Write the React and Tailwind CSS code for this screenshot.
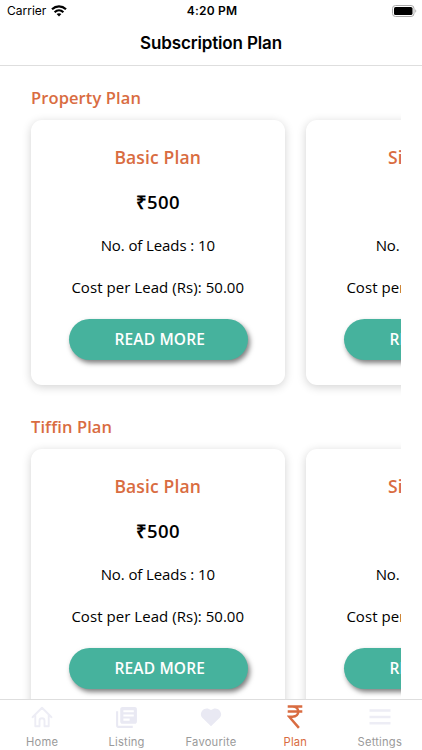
import React from 'react'
import { MdLibraryBooks } from 'react-icons/md'

const sections = ["Property Plan", "Tiffin Plan"];

const plans = [
  { name: "Basic Plan", price: "₹500", leads: 10, cost: "50.00" },
  { name: "Silver Plan", price: "₹900", leads: 20, cost: "45.00" },
];

const StatusBar = () => (
  <div className="grid h-[22px] grid-cols-3 items-center pl-[7px] pr-[5px] text-[12px]">
    <div className="flex items-center gap-[5px]">
      <span>Carrier</span>
      <svg width="16" height="12" viewBox="0 0 16 12" fill="none" stroke="#000" strokeWidth="2.2">
        <path d="M1 4.3C5 .5 11 .5 15 4.3" />
        <path d="M3.6 7.2C6.2 4.8 9.8 4.8 12.4 7.2" />
        <path d="M5.6 9.1C7 7.9 9 7.9 10.4 9.1L8 11.5Z" fill="#000" stroke="none" />
      </svg>
    </div>
    <span className="text-center text-[12px] font-semibold tracking-[0.2px]">4:20 PM</span>
    <svg className="justify-self-end" width="25" height="12" viewBox="0 0 25 12">
      <rect x=".5" y=".5" width="21.5" height="11" rx="3" fill="#fff" stroke="#aaa" />
      <rect x="2" y="2" width="18.5" height="8" rx="1.6" />
      <path d="M23.3 4.2v3.6c1.3-.6 1.3-3 0-3.6" fill="#aaa" />
    </svg>
  </div>
)

const PlanCard = ({ plan }) => (
  <div className="flex h-[264.5px] w-[254.5px] shrink-0 flex-col items-center rounded-[11px] bg-white pt-[24px] shadow-[0_2px_10px_rgba(0,0,0,0.18)]">
    <h3 className="h-[45px] whitespace-nowrap text-[17.5px] font-semibold leading-[26px] tracking-[0.15px] text-[#d96c41]">{plan.name}</h3>
    <p className="h-[45px] text-[18.5px] font-semibold leading-[26px] tracking-[0.35px] text-black">{plan.price}</p>
    <p className="h-[42px] whitespace-nowrap text-[15px] leading-[23px] tracking-[-0.1px]">No. of Leads : {plan.leads}</p>
    <p className="h-[43px] whitespace-nowrap text-[15px] leading-[23px] tracking-[0.05px]">Cost per Lead (Rs): {plan.cost}</p>
    <button className="ml-px h-[41px] w-[178.5px] rounded-full bg-[#46b29d] pl-[3px] text-[15.5px] font-semibold tracking-[0.15px] text-white shadow-[2px_3px_5px_rgba(0,0,0,0.5)]">
      READ MORE
    </button>
  </div>
)

const PlanSection = ({ title }) => (
  <section className="h-[329px]">
    <h2 className="ml-[31px] h-[24px] text-[16.5px] font-semibold leading-[24px] tracking-[0.1px] text-[#d96c41]">{title}</h2>
    <div className="ml-[20px] mr-[21px] flex h-[295px] gap-[20.5px] overflow-hidden px-[10.5px] pt-[10px]">
      {plans.map((plan) => (
        <PlanCard key={plan.name} plan={plan} />
      ))}
    </div>
  </section>
)

const HomeIcon = () => (
  <svg width="22" height="22" viewBox="0 0 22 22" fill="none" stroke="#ededf5" strokeWidth="1.9" strokeLinejoin="round" strokeLinecap="round">
    <path d="M1.5 11.2 11 1.8l9.5 9.4M4.3 9v11.2h4.2v-5.4a2.5 2.5 0 0 1 5 0v5.4h4.2V9" />
  </svg>
)

const HeartIcon = () => (
  <svg width="22" height="20" viewBox="0 0 22 20" fill="#e9e9f3">
    <path d="M11 19.2 2.3 10.8C-2.2 5.9 4.8-2.1 11 3.1c6.2-5.2 13.2 2.8 8.7 7.7Z" />
  </svg>
)

const RupeeIcon = () => (
  <svg width="16" height="24" viewBox="0 0 16 24" fill="none" stroke="#d96c41" strokeWidth="2.5">
    <path d="M.7 1.5H15.3M.7 6.4H15.3M1 1.5H5.5C13.2 1.5 13.2 11.7 5.500 11.700H2.200L11.900 22.900" />
  </svg>
)

const MenuIcon = () => (
  <svg width="22" height="16" viewBox="0 0 22 16" stroke="#ededf5" strokeWidth="2.4">
    <path d="M.5 1.500h21M.5 8h21M.5 14.300h21" />
  </svg>
)

const tabs = [
  { label: "Home", icon: <HomeIcon /> },
  { label: "Listing", icon: <MdLibraryBooks size={25} color="#e9e9f3" /> },
  { label: "Favourite", icon: <HeartIcon /> },
  { label: "Plan", icon: <RupeeIcon />, active: true },
  { label: "Settings", icon: <MenuIcon /> },
];

const App = () => {
  return (
    <div className="flex h-[750px] w-[422px] flex-col overflow-hidden bg-white font-['Inter',sans-serif] text-black">
      <header className="h-[66px] shrink-0 border-b border-[#dedede]">
        <StatusBar />
        <h1 className="h-[43px] text-center text-[17px] font-semibold leading-[43px] tracking-[-0.15px]">Subscription Plan</h1>
      </header>

      <main className="min-h-0 flex-1 overflow-hidden pt-[20px] font-['Open_Sans',sans-serif]">
        {sections.map((title) => (
          <PlanSection key={title} title={title} />
        ))}
      </main>

      {/* Bottom tabs */}
      <nav className="grid h-[51px] shrink-0 grid-cols-5 border-t border-[#dedede] bg-white">
        {tabs.map((tab) => (
          <div key={tab.label} className="flex flex-col items-center">
            <div className="flex h-[35px] items-center pb-[1px]">{tab.icon}</div>
            <span className={`text-[11.2px] leading-[14px] tracking-[0.2px] ${tab.active ? "text-[#d96c41]" : "text-[#9a9a9a]"}`}>
              {tab.label}
            </span>
          </div>
        ))}
      </nav>
    </div>
  )
}

export default App
